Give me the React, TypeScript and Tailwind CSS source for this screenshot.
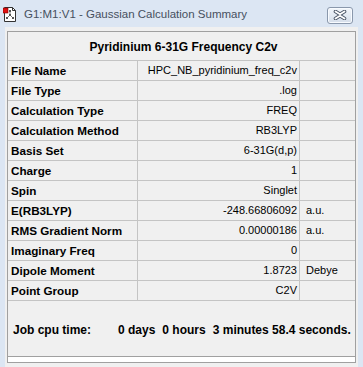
import React from "react";

const rows: { label: string; value: string; unit?: string }[] = [
  { label: "File Name", value: "HPC_NB_pyridinium_freq_c2v" },
  { label: "File Type", value: ".log" },
  { label: "Calculation Type", value: "FREQ" },
  { label: "Calculation Method", value: "RB3LYP" },
  { label: "Basis Set", value: "6-31G(d,p)" },
  { label: "Charge", value: "1" },
  { label: "Spin", value: "Singlet" },
  { label: "E(RB3LYP)", value: "-248.66806092", unit: "a.u." },
  { label: "RMS Gradient Norm", value: "0.00000186", unit: "a.u." },
  { label: "Imaginary Freq", value: "0" },
  { label: "Dipole Moment", value: "1.8723", unit: "Debye" },
  { label: "Point Group", value: "C2V" },
];

function AppIcon() {
  return (
    <svg width="14" height="15" viewBox="0 0 14 15" className="block">
      <path d="M1.5 0.5 H9.5 L12.5 3.5 V14.5 H1.5 Z" fill="#ffffff" stroke="#333" strokeWidth="1" />
      <path d="M9.5 0.5 V3.5 H12.5" fill="none" stroke="#333" strokeWidth="1" />
      <line x1="7" y1="4" x2="7" y2="8" stroke="#777" strokeWidth="1" />
      <line x1="7" y1="8" x2="4" y2="11" stroke="#777" strokeWidth="1" />
      <line x1="7" y1="8" x2="10" y2="11" stroke="#777" strokeWidth="1" />
      <rect x="6" y="3" width="2" height="2" fill="#555" />
      <rect x="6" y="7" width="2" height="2" fill="#555" />
      <rect x="3" y="10" width="2" height="2" fill="#555" />
      <rect x="9" y="10" width="2" height="2" fill="#555" />
      <rect x="0" y="1" width="5" height="5" fill="#e01010" stroke="#7a0000" strokeWidth="0.6" />
    </svg>
  );
}

function CloseButton() {
  return (
    <div className="w-[26px] h-[17px] rounded-[3px] border border-[#8a98ac] bg-gradient-to-b from-[#f2f6fb] to-[#d5deea] flex items-center justify-center shadow-[inset_0_0_0_1px_#f8fbff]">
      <svg width="14" height="10" viewBox="0 0 14 10">
        <path
          d="M2.5 1.5 L7 4.3 L11.5 1.5 M2.5 8.5 L7 5.7 L11.5 8.5"
          fill="none"
          stroke="#4a5566"
          strokeWidth="3.6"
          strokeLinecap="round"
        />
        <path
          d="M2.5 1.5 L7 4.3 L11.5 1.5 M2.5 8.5 L7 5.7 L11.5 8.5"
          fill="none"
          stroke="#ffffff"
          strokeWidth="1.8"
          strokeLinecap="round"
        />
      </svg>
    </div>
  );
}

export default function App() {
  return (
    <div
      className="w-[363px] h-[367px] bg-[#dce6f3] overflow-hidden flex flex-col"
      style={{ fontFamily: '"Liberation Sans", Arial, sans-serif' }}
    >
      {/* Title bar */}
      <div className="h-[27px] shrink-0 flex items-center pl-[3px] pr-[10px]">
        <div className="mt-[2px]">
          <AppIcon />
        </div>
        <div className="ml-[7px] text-[11.5px] text-[#46505e] mt-[3px] flex-1">
          G1:M1:V1 - Gaussian Calculation Summary
        </div>
        <div className="mt-[3px]">
          <CloseButton />
        </div>
      </div>

      {/* Client area */}
      <div className="mx-[5px] flex-1 bg-[#f0f0f0] pt-[4px] px-[2px]">
        <div className="border border-[#a0a0a0] bg-[#f0f0f0] text-black">
          <div className="h-[29px] border-b border-[#c4c4c4] flex items-center justify-center font-bold text-[12px] pl-[4px] pt-[1px]">
            Pyridinium 6-31G Frequency C2v
          </div>
          {rows.map((r) => (
            <div key={r.label} className="h-[20px] border-b border-[#c4c4c4] flex">
              <div className="w-[130px] border-r border-[#c4c4c4] pl-[3px] font-bold flex items-center text-[11.7px]">
                {r.label}
              </div>
              <div className="w-[162px] border-r border-[#c4c4c4] pr-[2px] flex items-center justify-end text-[11px]">
                {r.value}
              </div>
              <div className="flex-1 pl-[6px] flex items-center text-[11px]">{r.unit ?? ""}</div>
            </div>
          ))}
          <div className="h-[56px] border-b border-[#a0a0a0] flex items-center font-bold text-[12px] pl-[5px] pt-[2px]">
            <span className="w-[105px]">Job cpu time:</span>
            <span>0 days</span>
            <span className="ml-[7px]">0 hours</span>
            <span className="ml-[7px]">3 minutes 58.4 seconds.</span>
          </div>
          <div className="h-[5px] bg-white" />
        </div>
      </div>
    </div>
  );
}
